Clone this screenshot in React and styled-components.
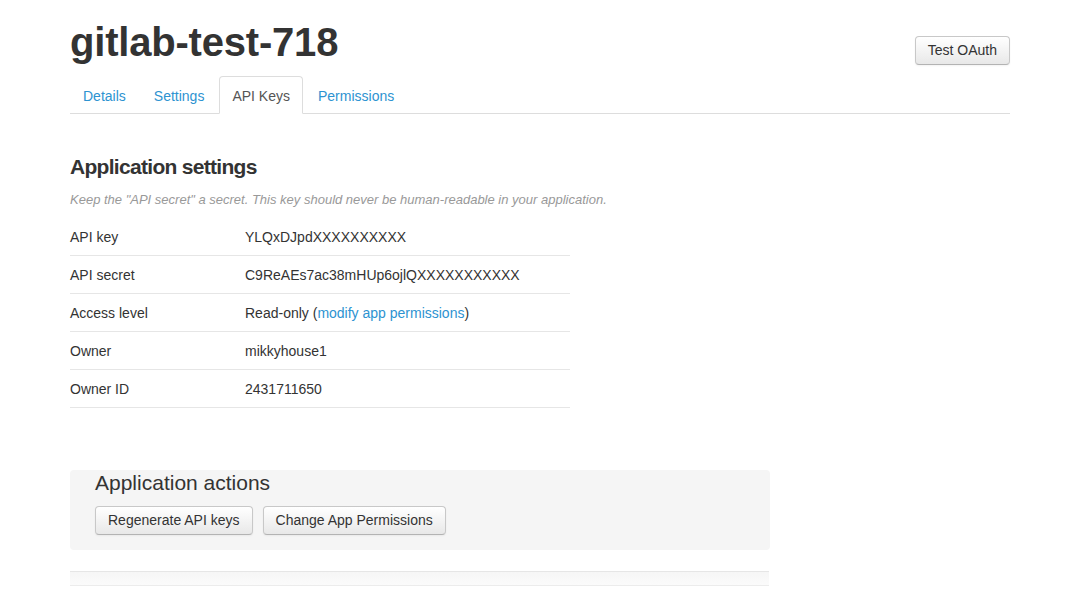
import React from 'react';
import styled, { createGlobalStyle } from 'styled-components';

const GlobalStyle = createGlobalStyle`
  html, body {
    margin: 0;
    padding: 0;
    background: #fff;
  }
  body {
    font-family: "Liberation Sans", Arial, sans-serif;
    font-size: 14px;
    color: #333;
  }
`;

const rows = [
  { label: 'API key', value: 'YLQxDJpdXXXXXXXXXX' },
  { label: 'API secret', value: 'C9ReAEs7ac38mHUp6ojlQXXXXXXXXXXX' },
  { label: 'Access level', value: 'access' },
  { label: 'Owner', value: 'mikkyhouse1' },
  { label: 'Owner ID', value: '2431711650' },
];

const tabs = ['Details', 'Settings', 'API Keys', 'Permissions'];

export default function App() {
  return (
    <>
      <GlobalStyle />
      <Page>
        <Header>
          <Title>gitlab-test-718</Title>
          <Button top={19}>Test OAuth</Button>
        </Header>
        <Tabs>
          {tabs.map((t) => (
            <Tab key={t} active={t === 'API Keys'}>
              {t}
            </Tab>
          ))}
        </Tabs>

        <Section>
          <SectionTitle>Application settings</SectionTitle>
          <Note>Keep the "API secret" a secret. This key should never be human-readable in your application.</Note>
          <Table>
            {rows.map((r) => (
              <Row key={r.label}>
                <Label>{r.label}</Label>
                <Value>
                  {r.value === 'access' ? (
                    <>
                      Read-only (<Link>modify app permissions</Link>)
                    </>
                  ) : (
                    r.value
                  )}
                </Value>
              </Row>
            ))}
          </Table>
        </Section>

        <Well>
          <WellTitle>Application actions</WellTitle>
          <Actions>
            <Button>Regenerate API keys</Button>
            <Button>Change App Permissions</Button>
          </Actions>
        </Well>

        <Strip />
      </Page>
    </>
  );
}

const Page = styled.div`
  width: 940px;
  margin: 0 auto;
  padding: 17px 0 0 12px;
`;

const Header = styled.div`
  display: flex;
  justify-content: space-between;
  align-items: flex-start;
`;

const Title = styled.h1`
  margin: 0;
  font-size: 40px;
  line-height: 50px;
  font-weight: bold;
  color: #333;
  letter-spacing: -0.2px;
`;

const Button = styled.button`
  box-sizing: border-box;
  height: 29px;
  font-family: "Liberation Sans", Arial, sans-serif;
  font-size: 14px;
  line-height: 19px;
  color: #333;
  padding: 4px 12px;
  margin-top: ${(p) => p.top ?? 18}px;
  border: 1px solid #c8c8c8;
  border-bottom-color: #b3b3b3;
  border-radius: 4px;
  background: linear-gradient(#ffffff, #e8e8e8);
  box-shadow: inset 0 1px 0 rgba(255, 255, 255, 0.2), 0 1px 2px rgba(0, 0, 0, 0.05);
  cursor: pointer;
`;

const Tabs = styled.div`
  display: flex;
  margin-top: 9px;
  border-bottom: 1px solid #ddd;
`;

const Tab = styled.div`
  padding: 9px 12px 7px;
  line-height: 20px;
  margin-right: 2px;
  margin-bottom: -1px;
  border: 1px solid ${(p) => (p.active ? '#ddd' : 'transparent')};
  border-bottom-color: ${(p) => (p.active ? '#fff' : 'transparent')};
  border-radius: 4px 4px 0 0;
  background: ${(p) => (p.active ? '#fff' : 'transparent')};
  color: ${(p) => (p.active ? '#555' : '#2d93d1')};
`;

const Section = styled.div`
  padding-top: 36px;
`;

const SectionTitle = styled.h2`
  margin: 0;
  font-size: 21px;
  line-height: 34px;
  font-weight: bold;
  letter-spacing: -0.7px;
  color: #333;
`;

const Note = styled.p`
  margin: 6px 0 0;
  font-size: 13px;
  line-height: 20px;
  font-style: italic;
  color: #999;
`;

const Table = styled.div`
  width: 500px;
  margin-top: 8px;
`;

const Row = styled.div`
  display: grid;
  grid-template-columns: 175px 1fr;
  height: 37px;
  align-items: center;
  border-bottom: 1px solid #e6e6e6;
  line-height: 20px;
`;

const Label = styled.div`
  color: #333;
`;

const Value = styled.div`
  color: #333;
`;

const Link = styled.span`
  color: #2d93d1;
`;

const Well = styled.div`
  width: 700px;
  box-sizing: border-box;
  margin-top: 62px;
  padding: 0 25px 15px;
  height: 80px;
  background: #f5f5f5;
  border-radius: 4px;
`;

const WellTitle = styled.h3`
  margin: 0;
  font-size: 21px;
  font-weight: normal;
  line-height: 26px;
  color: #333;
`;

const Actions = styled.div`
  display: flex;
  gap: 10px;
  margin-top: -8px;
`;

const Strip = styled.div`
  width: 699px;
  height: 13px;
  margin-top: 21px;
  background: linear-gradient(#f6f6f6, #fbfbfb);
  border-top: 1px solid #e6e6e6;
  border-bottom: 1px solid #ececec;
`;
